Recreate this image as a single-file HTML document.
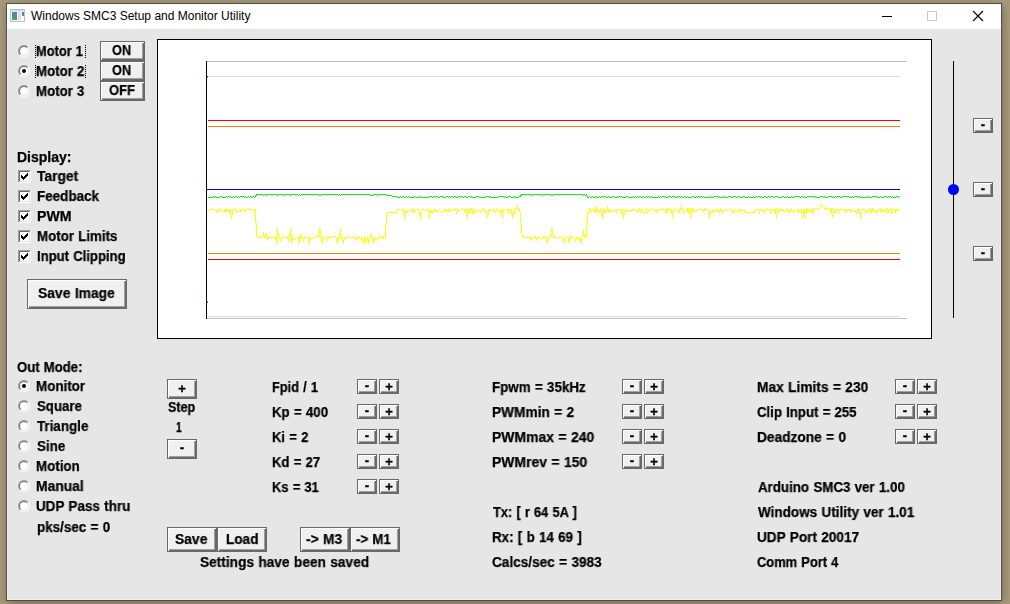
<!DOCTYPE html>
<html><head><meta charset="utf-8"><title>Windows SMC3 Setup and Monitor Utility</title>
<style>
html,body{margin:0;padding:0}
body{width:1010px;height:604px;position:relative;overflow:hidden;background:#a89b7c;font-family:"Liberation Sans",sans-serif}
#sh{position:absolute;left:6px;top:3px;width:996px;height:598px;box-shadow:1px 2px 9px rgba(0,0,0,.3);background:#534c3f}
#tb{position:absolute;left:7px;top:4px;width:994px;height:25px;background:#fff}
#cl{position:absolute;left:7px;top:29px;width:994px;height:571px;background:#e6e6e6;box-sizing:border-box;border-left:1px solid #f0f0f0;border-right:1px solid #f0f0f0;border-bottom:1px solid #f0f0f0}
#ti{position:absolute;left:31px;top:8px;font-size:12px;line-height:16px;color:#000;white-space:pre}
.t{position:absolute;font-weight:bold;font-size:14px;line-height:16px;color:#000;white-space:pre;transform-origin:0 0;will-change:transform;-webkit-text-stroke:0.25px #000}
.g{position:absolute;width:20px;height:16px;text-align:center;font-weight:bold;font-size:13px;line-height:16px;color:#000;will-change:transform;-webkit-text-stroke:0.35px #000}
.b{position:absolute;box-sizing:border-box;border:1px solid #696969;background:#f0f0f0;box-shadow:inset 1px 1px 0 #fff,inset -1px -1px 0 #696969,inset -2px -2px 0 #a0a0a0}
.r{position:absolute;width:12px;height:12px;box-sizing:border-box;border-radius:50%;border:1px solid;border-color:#a0a0a0 #fff #fff #a0a0a0;transform:rotate(0deg)}
.r>div{width:10px;height:10px;box-sizing:border-box;border-radius:50%;border:1px solid;border-color:#696969 #e3e3e3 #e3e3e3 #696969;background:#fff;position:relative}
.r i{position:absolute;left:2px;top:2px;width:4px;height:4px;border-radius:50%;background:#000}
.c{position:absolute;width:13px;height:13px;box-sizing:border-box;border:1px solid;border-color:#a0a0a0 #fff #fff #a0a0a0}
.c>div{width:11px;height:11px;box-sizing:border-box;border:1px solid;border-color:#696969 #e3e3e3 #e3e3e3 #696969;background:#fff;position:relative}
.c svg{position:absolute;left:1px;top:1px;display:block}
.f{position:absolute;width:1px;height:13px;background:repeating-linear-gradient(to bottom,#000 0,#000 1px,transparent 1px,transparent 2px)}
svg{position:absolute}
</style></head><body>
<div id="sh"></div><div id="tb"></div><div id="cl"></div>

<svg style="left:10px;top:9px" width="15" height="13" viewBox="0 0 15 13">
<defs><linearGradient id="ig" x1="0" y1="0" x2="0" y2="1"><stop offset="0" stop-color="#4f7fb8"/><stop offset="1" stop-color="#4aa35a"/></linearGradient></defs>
<rect x="0.5" y="0.5" width="14" height="12" fill="#fdfdfd" stroke="#b9c0cc"/>
<rect x="1" y="1" width="13" height="1.5" fill="#d5dae2"/>
<rect x="2" y="3" width="5" height="8" fill="url(#ig)"/>
<rect x="8" y="3" width="3" height="8" fill="#dedede"/>
<rect x="12" y="3" width="2" height="4" fill="url(#ig)"/>
</svg>
<div id="ti">Windows SMC3 Setup and Monitor Utility</div>
<svg style="left:870px;top:4px" width="130" height="25" viewBox="0 0 130 25">
<path d="M12 12.5h10" stroke="#000" stroke-width="1" shape-rendering="crispEdges"/>
<rect x="57.5" y="7.5" width="9" height="9" fill="none" stroke="#c8c8c8" shape-rendering="crispEdges"/>
<path d="M103 7l10 10M113 7l-10 10" stroke="#000" stroke-width="1.1" fill="none"/>
</svg>
<div class="r" style="left:18px;top:45px"><div></div></div>
<div class="r" style="left:18px;top:65px"><div><i></i></div></div>
<div class="r" style="left:18px;top:85px"><div></div></div>
<div class="b " style="left:100px;top:41px;width:45px;height:20px"></div>
<div class="b " style="left:100px;top:61px;width:45px;height:20px"></div>
<div class="b " style="left:100px;top:81px;width:45px;height:20px"></div>
<div class="f" style="left:35px;top:45px"></div><div class="f" style="left:85px;top:45px"></div>
<div class="f" style="left:35px;top:65px"></div><div class="f" style="left:85px;top:65px"></div>
<div class="c" style="left:18px;top:170px"><div><svg width="7" height="7" viewBox="0 0 7 7" shape-rendering="crispEdges"><path d="M0 2h1v3h-1zM1 3h1v3h-1zM2 4h1v3h-1zM3 3h1v3h-1zM4 2h1v3h-1zM5 1h1v3h-1zM6 0h1v3h-1z" fill="#000"/></svg></div></div>
<div class="c" style="left:18px;top:190px"><div><svg width="7" height="7" viewBox="0 0 7 7" shape-rendering="crispEdges"><path d="M0 2h1v3h-1zM1 3h1v3h-1zM2 4h1v3h-1zM3 3h1v3h-1zM4 2h1v3h-1zM5 1h1v3h-1zM6 0h1v3h-1z" fill="#000"/></svg></div></div>
<div class="c" style="left:18px;top:210px"><div><svg width="7" height="7" viewBox="0 0 7 7" shape-rendering="crispEdges"><path d="M0 2h1v3h-1zM1 3h1v3h-1zM2 4h1v3h-1zM3 3h1v3h-1zM4 2h1v3h-1zM5 1h1v3h-1zM6 0h1v3h-1z" fill="#000"/></svg></div></div>
<div class="c" style="left:18px;top:230px"><div><svg width="7" height="7" viewBox="0 0 7 7" shape-rendering="crispEdges"><path d="M0 2h1v3h-1zM1 3h1v3h-1zM2 4h1v3h-1zM3 3h1v3h-1zM4 2h1v3h-1zM5 1h1v3h-1zM6 0h1v3h-1z" fill="#000"/></svg></div></div>
<div class="c" style="left:18px;top:250px"><div><svg width="7" height="7" viewBox="0 0 7 7" shape-rendering="crispEdges"><path d="M0 2h1v3h-1zM1 3h1v3h-1zM2 4h1v3h-1zM3 3h1v3h-1zM4 2h1v3h-1zM5 1h1v3h-1zM6 0h1v3h-1z" fill="#000"/></svg></div></div>
<div class="b " style="left:27px;top:279px;width:100px;height:30px"></div>
<div class="r" style="left:18px;top:380px"><div><i></i></div></div>
<div class="r" style="left:18px;top:400px"><div></div></div>
<div class="r" style="left:18px;top:420px"><div></div></div>
<div class="r" style="left:18px;top:440px"><div></div></div>
<div class="r" style="left:18px;top:460px"><div></div></div>
<div class="r" style="left:18px;top:480px"><div></div></div>
<div class="r" style="left:18px;top:500px"><div></div></div>
<div class="b " style="left:167px;top:379px;width:30px;height:20px"></div>
<span class="g" style="left:172px;top:381px">+</span>
<div class="b " style="left:167px;top:439px;width:30px;height:20px"></div>
<span class="g" style="left:172px;top:440px">-</span>
<div class="b " style="left:357px;top:379px;width:20px;height:15px"></div>
<span class="g" style="left:357px;top:378px">-</span>
<div class="b " style="left:379px;top:379px;width:20px;height:15px"></div>
<span class="g" style="left:379px;top:378.5px">+</span>
<div class="b " style="left:357px;top:404px;width:20px;height:15px"></div>
<span class="g" style="left:357px;top:403px">-</span>
<div class="b " style="left:379px;top:404px;width:20px;height:15px"></div>
<span class="g" style="left:379px;top:403.5px">+</span>
<div class="b " style="left:357px;top:429px;width:20px;height:15px"></div>
<span class="g" style="left:357px;top:428px">-</span>
<div class="b " style="left:379px;top:429px;width:20px;height:15px"></div>
<span class="g" style="left:379px;top:428.5px">+</span>
<div class="b " style="left:357px;top:454px;width:20px;height:15px"></div>
<span class="g" style="left:357px;top:453px">-</span>
<div class="b " style="left:379px;top:454px;width:20px;height:15px"></div>
<span class="g" style="left:379px;top:453.5px">+</span>
<div class="b " style="left:357px;top:479px;width:20px;height:15px"></div>
<span class="g" style="left:357px;top:478px">-</span>
<div class="b " style="left:379px;top:479px;width:20px;height:15px"></div>
<span class="g" style="left:379px;top:478.5px">+</span>
<div class="b " style="left:622px;top:379px;width:20px;height:15px"></div>
<span class="g" style="left:622px;top:378px">-</span>
<div class="b " style="left:644px;top:379px;width:20px;height:15px"></div>
<span class="g" style="left:644px;top:378.5px">+</span>
<div class="b " style="left:622px;top:404px;width:20px;height:15px"></div>
<span class="g" style="left:622px;top:403px">-</span>
<div class="b " style="left:644px;top:404px;width:20px;height:15px"></div>
<span class="g" style="left:644px;top:403.5px">+</span>
<div class="b " style="left:622px;top:429px;width:20px;height:15px"></div>
<span class="g" style="left:622px;top:428px">-</span>
<div class="b " style="left:644px;top:429px;width:20px;height:15px"></div>
<span class="g" style="left:644px;top:428.5px">+</span>
<div class="b " style="left:622px;top:454px;width:20px;height:15px"></div>
<span class="g" style="left:622px;top:453px">-</span>
<div class="b " style="left:644px;top:454px;width:20px;height:15px"></div>
<span class="g" style="left:644px;top:453.5px">+</span>
<div class="b " style="left:895px;top:379px;width:20px;height:15px"></div>
<span class="g" style="left:895px;top:378px">-</span>
<div class="b " style="left:917px;top:379px;width:20px;height:15px"></div>
<span class="g" style="left:917px;top:378.5px">+</span>
<div class="b " style="left:895px;top:404px;width:20px;height:15px"></div>
<span class="g" style="left:895px;top:403px">-</span>
<div class="b " style="left:917px;top:404px;width:20px;height:15px"></div>
<span class="g" style="left:917px;top:403.5px">+</span>
<div class="b " style="left:895px;top:429px;width:20px;height:15px"></div>
<span class="g" style="left:895px;top:428px">-</span>
<div class="b " style="left:917px;top:429px;width:20px;height:15px"></div>
<span class="g" style="left:917px;top:428.5px">+</span>
<div class="b " style="left:167px;top:527px;width:50px;height:25px"></div>
<div class="b " style="left:217px;top:527px;width:50px;height:25px"></div>
<div class="b " style="left:300px;top:527px;width:50px;height:25px"></div>
<div class="b " style="left:350px;top:527px;width:50px;height:25px"></div>
<div class="b " style="left:973px;top:118px;width:20px;height:15px"></div>
<span class="g" style="left:973px;top:117px">-</span>
<div class="b " style="left:973px;top:182px;width:20px;height:15px"></div>
<span class="g" style="left:973px;top:181px">-</span>
<div class="b " style="left:973px;top:246px;width:20px;height:15px"></div>
<span class="g" style="left:973px;top:245px">-</span>
<div style="position:absolute;left:953px;top:61px;width:1px;height:257px;background:#000"></div>
<div style="position:absolute;left:948px;top:184px;width:11px;height:11px;border-radius:50%;background:#0000ff"></div>
<svg style="left:157px;top:39px" width="775" height="300" viewBox="0 0 775 300" shape-rendering="crispEdges">
<rect x="0.5" y="0.5" width="774" height="299" fill="#fff" stroke="#000"/>
<path d="M49 22.5H750M49 279.5H750" stroke="#c0c0c0" fill="none"/>
<path d="M50 37.5H743M50 277.5H743" stroke="#dcdcdc" fill="none"/>
<path d="M49.5 22V280" stroke="#000" fill="none"/>
<path d="M51 81.5H743M51 220.5H743" stroke="#ff0000" fill="none"/>
<path d="M51 87.5H743M51 214.5H743" stroke="#ff8000" fill="none"/>
<path d="M50 37h1v1h-1zM50 263h1v1h-1z" fill="#ff0000"/>
<path d="M50 38h1v1h-1zM50 262h1v1h-1z" fill="#ff8000"/>
<path d="M49 150.5H743" stroke="#0000ff" fill="none"/>
<path d="M50.5 158.5L51.5 158.5L52.5 158.5L53.5 158.5L54.5 158.5L55.5 158.5L56.5 157.5L57.5 158.5L58.5 157.5L59.5 158.5L60.5 158.5L61.5 158.5L62.5 158.5L63.5 157.5L64.5 157.5L65.5 158.5L66.5 158.5L67.5 158.5L68.5 158.5L69.5 157.5L70.5 158.5L71.5 157.5L72.5 157.5L73.5 157.5L74.5 158.5L75.5 158.5L76.5 157.5L77.5 158.5L78.5 157.5L79.5 157.5L80.5 158.5L81.5 157.5L82.5 158.5L83.5 157.5L84.5 157.5L85.5 157.5L86.5 157.5L87.5 158.5L88.5 157.5L89.5 158.5L90.5 158.5L91.5 157.5L92.5 158.5L93.5 157.5L94.5 158.5L95.5 157.5L96.5 157.5L97.5 158.5L98.5 157.5L99.5 155.5L100.5 155.5L101.5 155.5L102.5 155.5L103.5 155.5L104.5 155.5L105.5 155.5L106.5 156.5L107.5 155.5L108.5 155.5L109.5 156.5L110.5 155.5L111.5 155.5L112.5 155.5L113.5 155.5L114.5 155.5L115.5 155.5L116.5 155.5L117.5 155.5L118.5 155.5L119.5 155.5L120.5 156.5L121.5 155.5L122.5 155.5L123.5 155.5L124.5 155.5L125.5 155.5L126.5 155.5L127.5 156.5L128.5 155.5L129.5 155.5L130.5 155.5L131.5 155.5L132.5 155.5L133.5 156.5L134.5 155.5L135.5 155.5L136.5 155.5L137.5 155.5L138.5 155.5L139.5 155.5L140.5 155.5L141.5 156.5L142.5 155.5L143.5 156.5L144.5 155.5L145.5 155.5L146.5 155.5L147.5 155.5L148.5 155.5L149.5 155.5L150.5 155.5L151.5 155.5L152.5 155.5L153.5 155.5L154.5 155.5L155.5 155.5L156.5 155.5L157.5 155.5L158.5 155.5L159.5 155.5L160.5 155.5L161.5 155.5L162.5 156.5L163.5 156.5L164.5 155.5L165.5 155.5L166.5 155.5L167.5 155.5L168.5 155.5L169.5 155.5L170.5 155.5L171.5 155.5L172.5 155.5L173.5 155.5L174.5 155.5L175.5 155.5L176.5 155.5L177.5 155.5L178.5 155.5L179.5 155.5L180.5 155.5L181.5 156.5L182.5 155.5L183.5 156.5L184.5 155.5L185.5 155.5L186.5 155.5L187.5 155.5L188.5 155.5L189.5 155.5L190.5 155.5L191.5 155.5L192.5 155.5L193.5 155.5L194.5 155.5L195.5 155.5L196.5 155.5L197.5 155.5L198.5 155.5L199.5 155.5L200.5 155.5L201.5 155.5L202.5 155.5L203.5 155.5L204.5 155.5L205.5 155.5L206.5 155.5L207.5 155.5L208.5 155.5L209.5 155.5L210.5 155.5L211.5 155.5L212.5 155.5L213.5 156.5L214.5 156.5L215.5 156.5L216.5 155.5L217.5 155.5L218.5 155.5L219.5 155.5L220.5 156.5L221.5 155.5L222.5 155.5L223.5 155.5L224.5 155.5L225.5 155.5L226.5 155.5L227.5 155.5L228.5 155.5L229.5 156.5L230.5 156.5L231.5 156.5L232.5 156.5L233.5 156.5L234.5 156.5L235.5 157.5L236.5 157.5L237.5 157.5L238.5 157.5L239.5 157.5L240.5 158.5L241.5 158.5L242.5 158.5L243.5 157.5L244.5 158.5L245.5 157.5L246.5 157.5L247.5 158.5L248.5 158.5L249.5 157.5L250.5 158.5L251.5 157.5L252.5 158.5L253.5 158.5L254.5 158.5L255.5 158.5L256.5 158.5L257.5 157.5L258.5 158.5L259.5 158.5L260.5 158.5L261.5 158.5L262.5 157.5L263.5 158.5L264.5 158.5L265.5 158.5L266.5 158.5L267.5 158.5L268.5 158.5L269.5 158.5L270.5 158.5L271.5 158.5L272.5 157.5L273.5 157.5L274.5 157.5L275.5 158.5L276.5 157.5L277.5 157.5L278.5 158.5L279.5 157.5L280.5 157.5L281.5 158.5L282.5 158.5L283.5 157.5L284.5 157.5L285.5 157.5L286.5 158.5L287.5 158.5L288.5 158.5L289.5 157.5L290.5 157.5L291.5 158.5L292.5 157.5L293.5 158.5L294.5 157.5L295.5 157.5L296.5 158.5L297.5 157.5L298.5 157.5L299.5 158.5L300.5 158.5L301.5 157.5L302.5 157.5L303.5 158.5L304.5 157.5L305.5 157.5L306.5 158.5L307.5 157.5L308.5 157.5L309.5 158.5L310.5 158.5L311.5 157.5L312.5 157.5L313.5 158.5L314.5 157.5L315.5 158.5L316.5 158.5L317.5 158.5L318.5 158.5L319.5 157.5L320.5 157.5L321.5 157.5L322.5 158.5L323.5 158.5L324.5 158.5L325.5 158.5L326.5 158.5L327.5 158.5L328.5 158.5L329.5 157.5L330.5 157.5L331.5 157.5L332.5 158.5L333.5 157.5L334.5 158.5L335.5 158.5L336.5 158.5L337.5 158.5L338.5 158.5L339.5 158.5L340.5 158.5L341.5 157.5L342.5 157.5L343.5 157.5L344.5 157.5L345.5 157.5L346.5 157.5L347.5 158.5L348.5 157.5L349.5 158.5L350.5 158.5L351.5 157.5L352.5 157.5L353.5 157.5L354.5 158.5L355.5 158.5L356.5 158.5L357.5 157.5L358.5 158.5L359.5 158.5L360.5 158.5L361.5 158.5L362.5 157.5L363.5 157.5L364.5 155.5L365.5 155.5L366.5 155.5L367.5 155.5L368.5 155.5L369.5 155.5L370.5 155.5L371.5 155.5L372.5 155.5L373.5 155.5L374.5 156.5L375.5 155.5L376.5 155.5L377.5 155.5L378.5 155.5L379.5 155.5L380.5 155.5L381.5 155.5L382.5 155.5L383.5 155.5L384.5 155.5L385.5 156.5L386.5 155.5L387.5 155.5L388.5 155.5L389.5 155.5L390.5 155.5L391.5 155.5L392.5 155.5L393.5 155.5L394.5 156.5L395.5 156.5L396.5 155.5L397.5 155.5L398.5 155.5L399.5 155.5L400.5 155.5L401.5 155.5L402.5 155.5L403.5 155.5L404.5 155.5L405.5 155.5L406.5 155.5L407.5 155.5L408.5 155.5L409.5 155.5L410.5 155.5L411.5 155.5L412.5 155.5L413.5 155.5L414.5 155.5L415.5 155.5L416.5 155.5L417.5 155.5L418.5 155.5L419.5 155.5L420.5 155.5L421.5 155.5L422.5 155.5L423.5 155.5L424.5 155.5L425.5 155.5L426.5 156.5L427.5 155.5L428.5 156.5L429.5 155.5L430.5 158.5L431.5 158.5L432.5 157.5L433.5 158.5L434.5 158.5L435.5 157.5L436.5 158.5L437.5 158.5L438.5 157.5L439.5 158.5L440.5 158.5L441.5 158.5L442.5 157.5L443.5 158.5L444.5 157.5L445.5 157.5L446.5 158.5L447.5 157.5L448.5 157.5L449.5 158.5L450.5 158.5L451.5 157.5L452.5 158.5L453.5 158.5L454.5 158.5L455.5 157.5L456.5 157.5L457.5 158.5L458.5 158.5L459.5 158.5L460.5 157.5L461.5 158.5L462.5 157.5L463.5 157.5L464.5 157.5L465.5 158.5L466.5 158.5L467.5 158.5L468.5 158.5L469.5 157.5L470.5 157.5L471.5 158.5L472.5 158.5L473.5 158.5L474.5 158.5L475.5 158.5L476.5 157.5L477.5 158.5L478.5 157.5L479.5 158.5L480.5 157.5L481.5 158.5L482.5 157.5L483.5 157.5L484.5 158.5L485.5 158.5L486.5 157.5L487.5 158.5L488.5 158.5L489.5 157.5L490.5 158.5L491.5 157.5L492.5 158.5L493.5 158.5L494.5 157.5L495.5 158.5L496.5 158.5L497.5 158.5L498.5 158.5L499.5 158.5L500.5 158.5L501.5 157.5L502.5 158.5L503.5 157.5L504.5 158.5L505.5 157.5L506.5 157.5L507.5 158.5L508.5 157.5L509.5 158.5L510.5 158.5L511.5 157.5L512.5 157.5L513.5 157.5L514.5 158.5L515.5 157.5L516.5 157.5L517.5 157.5L518.5 158.5L519.5 158.5L520.5 157.5L521.5 158.5L522.5 157.5L523.5 158.5L524.5 157.5L525.5 158.5L526.5 158.5L527.5 157.5L528.5 158.5L529.5 158.5L530.5 157.5L531.5 158.5L532.5 158.5L533.5 158.5L534.5 158.5L535.5 157.5L536.5 157.5L537.5 158.5L538.5 158.5L539.5 157.5L540.5 158.5L541.5 157.5L542.5 157.5L543.5 158.5L544.5 157.5L545.5 158.5L546.5 157.5L547.5 158.5L548.5 158.5L549.5 158.5L550.5 158.5L551.5 158.5L552.5 158.5L553.5 157.5L554.5 158.5L555.5 158.5L556.5 158.5L557.5 157.5L558.5 157.5L559.5 157.5L560.5 157.5L561.5 158.5L562.5 157.5L563.5 158.5L564.5 158.5L565.5 158.5L566.5 158.5L567.5 157.5L568.5 158.5L569.5 158.5L570.5 158.5L571.5 157.5L572.5 157.5L573.5 157.5L574.5 158.5L575.5 158.5L576.5 157.5L577.5 157.5L578.5 157.5L579.5 158.5L580.5 158.5L581.5 157.5L582.5 157.5L583.5 158.5L584.5 158.5L585.5 158.5L586.5 157.5L587.5 157.5L588.5 158.5L589.5 158.5L590.5 158.5L591.5 157.5L592.5 158.5L593.5 158.5L594.5 158.5L595.5 158.5L596.5 157.5L597.5 158.5L598.5 158.5L599.5 157.5L600.5 158.5L601.5 157.5L602.5 157.5L603.5 158.5L604.5 157.5L605.5 158.5L606.5 158.5L607.5 157.5L608.5 157.5L609.5 158.5L610.5 158.5L611.5 157.5L612.5 157.5L613.5 158.5L614.5 157.5L615.5 157.5L616.5 158.5L617.5 158.5L618.5 157.5L619.5 157.5L620.5 157.5L621.5 158.5L622.5 158.5L623.5 158.5L624.5 158.5L625.5 157.5L626.5 157.5L627.5 158.5L628.5 158.5L629.5 158.5L630.5 157.5L631.5 158.5L632.5 158.5L633.5 158.5L634.5 157.5L635.5 158.5L636.5 158.5L637.5 157.5L638.5 157.5L639.5 157.5L640.5 157.5L641.5 157.5L642.5 157.5L643.5 158.5L644.5 157.5L645.5 157.5L646.5 158.5L647.5 157.5L648.5 158.5L649.5 158.5L650.5 157.5L651.5 157.5L652.5 157.5L653.5 157.5L654.5 157.5L655.5 157.5L656.5 157.5L657.5 158.5L658.5 157.5L659.5 158.5L660.5 158.5L661.5 158.5L662.5 158.5L663.5 157.5L664.5 157.5L665.5 157.5L666.5 158.5L667.5 157.5L668.5 158.5L669.5 158.5L670.5 158.5L671.5 157.5L672.5 157.5L673.5 157.5L674.5 157.5L675.5 158.5L676.5 157.5L677.5 158.5L678.5 157.5L679.5 158.5L680.5 157.5L681.5 157.5L682.5 157.5L683.5 158.5L684.5 158.5L685.5 157.5L686.5 157.5L687.5 157.5L688.5 157.5L689.5 157.5L690.5 157.5L691.5 157.5L692.5 158.5L693.5 158.5L694.5 158.5L695.5 157.5L696.5 158.5L697.5 157.5L698.5 157.5L699.5 157.5L700.5 158.5L701.5 157.5L702.5 157.5L703.5 158.5L704.5 158.5L705.5 158.5L706.5 158.5L707.5 158.5L708.5 158.5L709.5 158.5L710.5 157.5L711.5 158.5L712.5 158.5L713.5 158.5L714.5 158.5L715.5 157.5L716.5 157.5L717.5 157.5L718.5 157.5L719.5 157.5L720.5 158.5L721.5 158.5L722.5 158.5L723.5 157.5L724.5 158.5L725.5 158.5L726.5 158.5L727.5 157.5L728.5 157.5L729.5 157.5L730.5 158.5L731.5 157.5L732.5 158.5L733.5 157.5L734.5 158.5L735.5 157.5L736.5 158.5L737.5 158.5L738.5 158.5L739.5 157.5L740.5 157.5L741.5 158.5L742.5 157.5" stroke="#00ff00" fill="none" stroke-width="1"/>
<path d="M50.5 170.5L51.5 171.5L52.5 171.5L53.5 170.5L54.5 170.5L55.5 170.5L56.5 170.5L57.5 170.5L58.5 171.5L59.5 171.5L60.5 173.5L61.5 172.5L62.5 170.5L63.5 170.5L64.5 170.5L65.5 171.5L66.5 171.5L67.5 170.5L68.5 172.5L69.5 170.5L70.5 170.5L71.5 172.5L72.5 170.5L73.5 171.5L74.5 179.5L75.5 173.5L76.5 170.5L77.5 170.5L78.5 170.5L79.5 172.5L80.5 173.5L81.5 172.5L82.5 171.5L83.5 172.5L84.5 170.5L85.5 170.5L86.5 171.5L87.5 172.5L88.5 170.5L89.5 170.5L90.5 170.5L91.5 170.5L92.5 170.5L93.5 170.5L94.5 170.5L95.5 171.5L96.5 172.5L97.5 170.5L98.5 170.5L99.5 197.5L100.5 198.5L101.5 198.5L102.5 198.5L103.5 198.5L104.5 198.5L105.5 197.5L106.5 194.5L107.5 198.5L108.5 198.5L109.5 195.5L110.5 200.5L111.5 198.5L112.5 198.5L113.5 198.5L114.5 198.5L115.5 198.5L116.5 198.5L117.5 198.5L118.5 198.5L119.5 204.5L120.5 189.5L121.5 198.5L122.5 198.5L123.5 201.5L124.5 198.5L125.5 198.5L126.5 198.5L127.5 198.5L128.5 197.5L129.5 198.5L130.5 198.5L131.5 201.5L132.5 198.5L133.5 189.5L134.5 204.5L135.5 198.5L136.5 198.5L137.5 199.5L138.5 200.5L139.5 199.5L140.5 198.5L141.5 198.5L142.5 204.5L143.5 195.5L144.5 198.5L145.5 198.5L146.5 201.5L147.5 198.5L148.5 198.5L149.5 198.5L150.5 197.5L151.5 198.5L152.5 204.5L153.5 198.5L154.5 199.5L155.5 198.5L156.5 199.5L157.5 199.5L158.5 198.5L159.5 197.5L160.5 198.5L161.5 198.5L162.5 189.5L163.5 190.5L164.5 200.5L165.5 204.5L166.5 198.5L167.5 198.5L168.5 198.5L169.5 197.5L170.5 200.5L171.5 198.5L172.5 198.5L173.5 198.5L174.5 198.5L175.5 197.5L176.5 198.5L177.5 197.5L178.5 197.5L179.5 198.5L180.5 204.5L181.5 198.5L182.5 199.5L183.5 189.5L184.5 199.5L185.5 198.5L186.5 204.5L187.5 198.5L188.5 198.5L189.5 199.5L190.5 198.5L191.5 197.5L192.5 198.5L193.5 198.5L194.5 198.5L195.5 198.5L196.5 198.5L197.5 197.5L198.5 198.5L199.5 200.5L200.5 198.5L201.5 198.5L202.5 198.5L203.5 199.5L204.5 198.5L205.5 204.5L206.5 200.5L207.5 198.5L208.5 204.5L209.5 201.5L210.5 198.5L211.5 204.5L212.5 198.5L213.5 199.5L214.5 194.5L215.5 198.5L216.5 204.5L217.5 198.5L218.5 201.5L219.5 201.5L220.5 198.5L221.5 199.5L222.5 198.5L223.5 197.5L224.5 198.5L225.5 197.5L226.5 199.5L227.5 198.5L228.5 198.5L229.5 174.5L230.5 173.5L231.5 173.5L232.5 173.5L233.5 173.5L234.5 173.5L235.5 173.5L236.5 173.5L237.5 173.5L238.5 173.5L239.5 173.5L240.5 170.5L241.5 170.5L242.5 170.5L243.5 170.5L244.5 171.5L245.5 170.5L246.5 170.5L247.5 179.5L248.5 172.5L249.5 171.5L250.5 173.5L251.5 172.5L252.5 171.5L253.5 170.5L254.5 170.5L255.5 172.5L256.5 170.5L257.5 172.5L258.5 171.5L259.5 170.5L260.5 170.5L261.5 170.5L262.5 173.5L263.5 179.5L264.5 173.5L265.5 170.5L266.5 170.5L267.5 171.5L268.5 171.5L269.5 170.5L270.5 170.5L271.5 170.5L272.5 179.5L273.5 171.5L274.5 171.5L275.5 173.5L276.5 170.5L277.5 170.5L278.5 171.5L279.5 172.5L280.5 171.5L281.5 172.5L282.5 171.5L283.5 172.5L284.5 172.5L285.5 173.5L286.5 172.5L287.5 170.5L288.5 170.5L289.5 172.5L290.5 171.5L291.5 172.5L292.5 170.5L293.5 172.5L294.5 171.5L295.5 170.5L296.5 170.5L297.5 170.5L298.5 170.5L299.5 173.5L300.5 170.5L301.5 172.5L302.5 171.5L303.5 170.5L304.5 170.5L305.5 170.5L306.5 170.5L307.5 170.5L308.5 172.5L309.5 170.5L310.5 179.5L311.5 170.5L312.5 170.5L313.5 173.5L314.5 170.5L315.5 173.5L316.5 170.5L317.5 173.5L318.5 171.5L319.5 171.5L320.5 170.5L321.5 171.5L322.5 172.5L323.5 173.5L324.5 170.5L325.5 170.5L326.5 170.5L327.5 170.5L328.5 172.5L329.5 172.5L330.5 179.5L331.5 172.5L332.5 170.5L333.5 170.5L334.5 171.5L335.5 170.5L336.5 170.5L337.5 172.5L338.5 173.5L339.5 170.5L340.5 170.5L341.5 173.5L342.5 172.5L343.5 173.5L344.5 171.5L345.5 179.5L346.5 170.5L347.5 171.5L348.5 170.5L349.5 170.5L350.5 170.5L351.5 172.5L352.5 170.5L353.5 170.5L354.5 170.5L355.5 179.5L356.5 173.5L357.5 170.5L358.5 173.5L359.5 170.5L360.5 167.5L361.5 170.5L362.5 170.5L363.5 175.5L364.5 191.5L365.5 198.5L366.5 198.5L367.5 198.5L368.5 198.5L369.5 198.5L370.5 198.5L371.5 198.5L372.5 198.5L373.5 200.5L374.5 198.5L375.5 199.5L376.5 198.5L377.5 198.5L378.5 197.5L379.5 200.5L380.5 198.5L381.5 198.5L382.5 198.5L383.5 199.5L384.5 199.5L385.5 198.5L386.5 199.5L387.5 197.5L388.5 198.5L389.5 198.5L390.5 204.5L391.5 198.5L392.5 198.5L393.5 198.5L394.5 189.5L395.5 190.5L396.5 198.5L397.5 198.5L398.5 198.5L399.5 198.5L400.5 199.5L401.5 198.5L402.5 198.5L403.5 198.5L404.5 197.5L405.5 198.5L406.5 198.5L407.5 204.5L408.5 199.5L409.5 198.5L410.5 198.5L411.5 198.5L412.5 204.5L413.5 197.5L414.5 198.5L415.5 198.5L416.5 197.5L417.5 198.5L418.5 201.5L419.5 198.5L420.5 198.5L421.5 200.5L422.5 201.5L423.5 198.5L424.5 204.5L425.5 198.5L426.5 190.5L427.5 198.5L428.5 198.5L429.5 198.5L430.5 175.5L431.5 173.5L432.5 170.5L433.5 172.5L434.5 170.5L435.5 170.5L436.5 170.5L437.5 173.5L438.5 167.5L439.5 172.5L440.5 170.5L441.5 173.5L442.5 172.5L443.5 170.5L444.5 173.5L445.5 179.5L446.5 170.5L447.5 170.5L448.5 173.5L449.5 173.5L450.5 167.5L451.5 173.5L452.5 170.5L453.5 170.5L454.5 173.5L455.5 172.5L456.5 172.5L457.5 171.5L458.5 170.5L459.5 172.5L460.5 170.5L461.5 170.5L462.5 170.5L463.5 170.5L464.5 173.5L465.5 170.5L466.5 179.5L467.5 172.5L468.5 170.5L469.5 171.5L470.5 172.5L471.5 171.5L472.5 172.5L473.5 171.5L474.5 172.5L475.5 170.5L476.5 170.5L477.5 171.5L478.5 170.5L479.5 171.5L480.5 172.5L481.5 173.5L482.5 170.5L483.5 172.5L484.5 170.5L485.5 170.5L486.5 173.5L487.5 173.5L488.5 173.5L489.5 170.5L490.5 173.5L491.5 171.5L492.5 170.5L493.5 170.5L494.5 170.5L495.5 171.5L496.5 170.5L497.5 171.5L498.5 170.5L499.5 172.5L500.5 170.5L501.5 170.5L502.5 171.5L503.5 170.5L504.5 170.5L505.5 170.5L506.5 170.5L507.5 170.5L508.5 173.5L509.5 170.5L510.5 172.5L511.5 170.5L512.5 170.5L513.5 170.5L514.5 170.5L515.5 179.5L516.5 171.5L517.5 170.5L518.5 170.5L519.5 170.5L520.5 171.5L521.5 170.5L522.5 172.5L523.5 170.5L524.5 167.5L525.5 170.5L526.5 173.5L527.5 173.5L528.5 172.5L529.5 172.5L530.5 170.5L531.5 172.5L532.5 170.5L533.5 179.5L534.5 170.5L535.5 172.5L536.5 170.5L537.5 172.5L538.5 172.5L539.5 171.5L540.5 171.5L541.5 170.5L542.5 170.5L543.5 170.5L544.5 170.5L545.5 170.5L546.5 172.5L547.5 170.5L548.5 170.5L549.5 170.5L550.5 170.5L551.5 171.5L552.5 179.5L553.5 172.5L554.5 171.5L555.5 171.5L556.5 173.5L557.5 172.5L558.5 172.5L559.5 170.5L560.5 170.5L561.5 173.5L562.5 172.5L563.5 170.5L564.5 172.5L565.5 173.5L566.5 172.5L567.5 171.5L568.5 170.5L569.5 171.5L570.5 170.5L571.5 170.5L572.5 171.5L573.5 170.5L574.5 170.5L575.5 171.5L576.5 173.5L577.5 171.5L578.5 170.5L579.5 171.5L580.5 172.5L581.5 173.5L582.5 170.5L583.5 170.5L584.5 172.5L585.5 171.5L586.5 171.5L587.5 171.5L588.5 173.5L589.5 173.5L590.5 173.5L591.5 173.5L592.5 173.5L593.5 173.5L594.5 173.5L595.5 173.5L596.5 173.5L597.5 173.5L598.5 171.5L599.5 170.5L600.5 170.5L601.5 170.5L602.5 173.5L603.5 170.5L604.5 170.5L605.5 171.5L606.5 171.5L607.5 173.5L608.5 170.5L609.5 170.5L610.5 170.5L611.5 170.5L612.5 170.5L613.5 173.5L614.5 170.5L615.5 171.5L616.5 172.5L617.5 170.5L618.5 170.5L619.5 179.5L620.5 170.5L621.5 172.5L622.5 172.5L623.5 170.5L624.5 170.5L625.5 170.5L626.5 172.5L627.5 172.5L628.5 171.5L629.5 172.5L630.5 170.5L631.5 173.5L632.5 173.5L633.5 170.5L634.5 172.5L635.5 172.5L636.5 173.5L637.5 170.5L638.5 171.5L639.5 171.5L640.5 170.5L641.5 172.5L642.5 170.5L643.5 171.5L644.5 170.5L645.5 179.5L646.5 170.5L647.5 170.5L648.5 179.5L649.5 170.5L650.5 172.5L651.5 172.5L652.5 170.5L653.5 170.5L654.5 172.5L655.5 170.5L656.5 173.5L657.5 170.5L658.5 169.5L659.5 170.5L660.5 169.5L661.5 169.5L662.5 169.5L663.5 168.5L664.5 165.5L665.5 166.5L666.5 167.5L667.5 168.5L668.5 170.5L669.5 169.5L670.5 169.5L671.5 169.5L672.5 170.5L673.5 172.5L674.5 170.5L675.5 179.5L676.5 170.5L677.5 172.5L678.5 173.5L679.5 170.5L680.5 170.5L681.5 173.5L682.5 170.5L683.5 170.5L684.5 170.5L685.5 170.5L686.5 171.5L687.5 170.5L688.5 172.5L689.5 170.5L690.5 171.5L691.5 170.5L692.5 170.5L693.5 172.5L694.5 170.5L695.5 171.5L696.5 171.5L697.5 172.5L698.5 171.5L699.5 173.5L700.5 171.5L701.5 170.5L702.5 170.5L703.5 179.5L704.5 171.5L705.5 170.5L706.5 170.5L707.5 170.5L708.5 173.5L709.5 173.5L710.5 170.5L711.5 170.5L712.5 173.5L713.5 170.5L714.5 172.5L715.5 170.5L716.5 172.5L717.5 171.5L718.5 171.5L719.5 173.5L720.5 171.5L721.5 170.5L722.5 170.5L723.5 172.5L724.5 170.5L725.5 172.5L726.5 172.5L727.5 170.5L728.5 171.5L729.5 173.5L730.5 170.5L731.5 172.5L732.5 170.5L733.5 170.5L734.5 173.5L735.5 170.5L736.5 170.5L737.5 170.5L738.5 172.5L739.5 170.5L740.5 170.5L741.5 170.5L742.5 173.5" stroke="#ffff00" fill="none" stroke-width="1"/>
</svg>
<span class="t" style="left:36.29px;top:43px;transform:scaleX(0.9178);word-spacing:0.6px">Motor 1</span>
<span class="t" style="left:36.20px;top:63px;transform:scaleX(0.9467);word-spacing:0.6px">Motor 2</span>
<span class="t" style="left:36.23px;top:83px;transform:scaleX(0.9463);word-spacing:0.6px">Motor 3</span>
<span class="t" style="left:112.23px;top:42px;transform:scaleX(0.9062)">ON</span>
<span class="t" style="left:112.23px;top:62px;transform:scaleX(0.9062)">ON</span>
<span class="t" style="left:108.52px;top:82px;transform:scaleX(0.9240)">OFF</span>
<span class="t" style="left:17.16px;top:149px;transform:scaleX(1.0011)">Display:</span>
<span class="t" style="left:36.89px;top:168px;transform:scaleX(0.9876)">Target</span>
<span class="t" style="left:37.16px;top:188px;transform:scaleX(0.9605)">Feedback</span>
<span class="t" style="left:37.15px;top:208px;transform:scaleX(1.0097)">PWM</span>
<span class="t" style="left:37.18px;top:228px;transform:scaleX(0.9500);word-spacing:0.6px">Motor Limits</span>
<span class="t" style="left:37.06px;top:248px;transform:scaleX(0.9353);word-spacing:0.6px">Input Clipping</span>
<span class="t" style="left:38.27px;top:285px;transform:scaleX(0.9900);word-spacing:0.6px">Save Image</span>
<span class="t" style="left:17.47px;top:359px;transform:scaleX(0.9370);word-spacing:0.6px">Out Mode:</span>
<span class="t" style="left:36.18px;top:378px;transform:scaleX(0.9572)">Monitor</span>
<span class="t" style="left:36.50px;top:398px;transform:scaleX(0.9440)">Square</span>
<span class="t" style="left:36.88px;top:418px;transform:scaleX(0.9558)">Triangle</span>
<span class="t" style="left:36.52px;top:438px;transform:scaleX(0.9561)">Sine</span>
<span class="t" style="left:36.18px;top:458px;transform:scaleX(0.9530)">Motion</span>
<span class="t" style="left:36.14px;top:478px;transform:scaleX(0.9892)">Manual</span>
<span class="t" style="left:36.36px;top:498px;transform:scaleX(0.9596);word-spacing:0.6px">UDP Pass thru</span>
<span class="t" style="left:37.23px;top:519px;transform:scaleX(0.9596);word-spacing:0.6px">pks/sec = 0</span>
<span class="t" style="left:167.52px;top:399px;transform:scaleX(0.8958)">Step</span>
<span class="t" style="left:176.24px;top:419px;transform:scaleX(0.7239)">1</span>
<span class="t" style="left:272.32px;top:379px;transform:scaleX(0.9153);word-spacing:0.6px">Fpid / 1</span>
<span class="t" style="left:272.29px;top:404px;transform:scaleX(0.9475);word-spacing:0.6px">Kp = 400</span>
<span class="t" style="left:272.31px;top:429px;transform:scaleX(0.9319);word-spacing:0.6px">Ki = 2</span>
<span class="t" style="left:272.30px;top:454px;transform:scaleX(0.9382);word-spacing:0.6px">Kd = 27</span>
<span class="t" style="left:272.31px;top:479px;transform:scaleX(0.9250);word-spacing:0.6px">Ks = 31</span>
<span class="t" style="left:175.23px;top:531px;transform:scaleX(0.9890)">Save</span>
<span class="t" style="left:225.57px;top:531px;transform:scaleX(0.9711)">Load</span>
<span class="t" style="left:306.38px;top:531px;transform:scaleX(0.9830);word-spacing:0.6px">-&gt; M3</span>
<span class="t" style="left:356.48px;top:531px;transform:scaleX(0.9450);word-spacing:0.6px">-&gt; M1</span>
<span class="t" style="left:200.17px;top:554px;transform:scaleX(0.9775);word-spacing:0.6px">Settings have been saved</span>
<span class="t" style="left:492.21px;top:379px;transform:scaleX(0.9549);word-spacing:0.6px">Fpwm = 35kHz</span>
<span class="t" style="left:492.20px;top:404px;transform:scaleX(0.9775);word-spacing:0.6px">PWMmin = 2</span>
<span class="t" style="left:492.18px;top:429px;transform:scaleX(0.9943);word-spacing:0.6px">PWMmax = 240</span>
<span class="t" style="left:492.20px;top:454px;transform:scaleX(0.9935);word-spacing:0.6px">PWMrev = 150</span>
<span class="t" style="left:492.90px;top:504px;transform:scaleX(0.9191);word-spacing:0.6px">Tx: [ r 64 5A ]</span>
<span class="t" style="left:492.26px;top:529px;transform:scaleX(0.9549);word-spacing:0.6px">Rx: [ b 14 69 ]</span>
<span class="t" style="left:492.47px;top:554px;transform:scaleX(0.9722);word-spacing:0.6px">Calcs/sec = 3983</span>
<span class="t" style="left:757.19px;top:379px;transform:scaleX(0.9795);word-spacing:0.6px">Max Limits = 230</span>
<span class="t" style="left:757.47px;top:404px;transform:scaleX(0.9426);word-spacing:0.6px">Clip Input = 255</span>
<span class="t" style="left:757.23px;top:429px;transform:scaleX(0.9789);word-spacing:0.6px">Deadzone = 0</span>
<span class="t" style="left:757.53px;top:479px;transform:scaleX(0.9519);word-spacing:0.6px">Arduino SMC3 ver 1.00</span>
<span class="t" style="left:757.90px;top:504px;transform:scaleX(0.9650);word-spacing:0.6px">Windows Utility ver 1.01</span>
<span class="t" style="left:757.34px;top:529px;transform:scaleX(0.9699);word-spacing:0.6px">UDP Port 20017</span>
<span class="t" style="left:757.49px;top:554px;transform:scaleX(0.9207);word-spacing:0.6px">Comm Port 4</span>
</body></html>
